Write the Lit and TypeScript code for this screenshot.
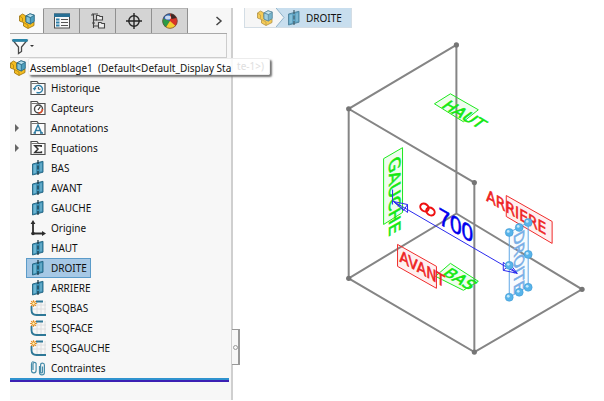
import { LitElement, html, svg, css } from "lit";
import { customElement, property } from "lit/decorators.js";
import { classMap } from "lit/directives/class-map.js";

type IconName =
  | "assembly" | "properties" | "config" | "target" | "appearance" | "chevron" | "filter"
  | "history" | "sensor" | "annotation" | "equation" | "plane" | "origin" | "sketch" | "mates";

const folder = svg`<path d="M1 14.5V1.5H7L8.5 3.5H15V14.5Z" fill="#fbfbfb" stroke="#505050" stroke-width="1.2"/><path d="M1.5 3.5H8" stroke="#777"/>`;

const ICONS: Record<IconName, unknown> = {
  assembly: svg`
    <path d="M0.5 3L3.5 1L7 3V7L9 8.5L15 9V12.5L9 15.5L4.5 13V9.5L0.5 8Z" fill="#f5bd21" stroke="#98700c" stroke-width=".8"/>
    <path d="M4.5 9.5L9 12V15.3M0.5 3L3.5 5V8.5" fill="none" stroke="#a87b10" stroke-width=".7"/>
    <path d="M7 3L11 0.8L15.3 2.2V8.5L11.3 11L7 9Z" fill="#4d9fbd" stroke="#205f7c" stroke-width=".8"/>
    <path d="M7 3L11 0.8L15.3 2.2L11.3 4.6Z" fill="#b6e0ee" stroke="#205f7c" stroke-width=".7"/>
    <path d="M11.3 4.6V11L7 9V3Z" fill="#82c3da" stroke="#205f7c" stroke-width=".7"/>`,
  properties: svg`
    <rect x=".5" y="1" width="15" height="14" fill="#f8f8f8" stroke="#4c4c4c"/>
    <rect x="0" y=".5" width="16" height="3.5" fill="#286f94"/>
    <path d="M2 6.5H5.5M2 9.5H5.5M2 12.5H5.5" stroke="#2f80aa" stroke-width="2"/>
    <path d="M7 6.5H14M7 9.5H14M7 12.5H14" stroke="#555" stroke-width="1.1"/>`,
  config: svg`
    <path d="M2 1H8M3.5 1V15M3.5 7H7M3.5 13H8" fill="none" stroke="#454545" stroke-width="1.1"/>
    <path d="M6.5 2.5H9L10 3.5H12.5V7H6.5ZM8.5 9.5H11L12 10.5H14.5V15H8.5Z" fill="#ededed" stroke="#454545" stroke-width="1.1"/>
    <path d="M2 1V3M2 10H5" stroke="#454545"/>`,
  target: svg`
    <circle cx="8" cy="8" r="5.2" fill="none" stroke="#252525" stroke-width="1.4"/>
    <path d="M8 0V16M0 8H16" stroke="#252525" stroke-width="1.4"/>`,
  appearance: svg`
    <circle cx="8" cy="8" r="7.5" fill="#d83427"/>
    <path d="M8 8L1 5.5A7.5 7.5 0 0 0 4 14.3Z" fill="#2c9b45"/>
    <path d="M8 8L1 5.5A7.5 7.5 0 0 1 8 .5Z" fill="#2868bb"/>
    <path d="M8 8L4 14.3A7.5 7.5 0 0 0 13.6 13Z" fill="#f4ce2f"/>
    <path d="M9.5 6L8.5 .6A7.5 7.5 0 0 1 14.6 5Z" fill="#3b2926"/>
    <ellipse cx="6" cy="4.6" rx="3" ry="2" fill="#fff" opacity=".75"/>
    <circle cx="8" cy="8" r="7.3" fill="none" stroke="#574b42" stroke-width=".6"/>`,
  chevron: svg`<path d="M5.5 4L10 8L5.5 12" fill="none" stroke="#444" stroke-width="1.5"/>`,
  filter: svg`
    <path d="M1 2.5H15L9.5 9V13.5L6.5 15.5V9Z" fill="#fcfcfc" stroke="#484848" stroke-width="1.3"/>
    <path d="M.5 1H15.5V3.8H.5Z" fill="#2884a8"/>`,
  history: svg`${folder}
    <path d="M4.5 9A4 3.7 0 1 1 6.5 12.3" fill="none" stroke="#2f7fa8" stroke-width="1.4"/>
    <path d="M2.7 8H6.4L4.5 10.8Z" fill="#2f7fa8"/><path d="M8.4 7V9.2H10.5" fill="none" stroke="#444"/>`,
  sensor: svg`${folder}
    <circle cx="8.5" cy="9" r="4" fill="#fff" stroke="#444" stroke-width="1.4"/>
    <path d="M8.5 13A4 4 0 0 0 12.5 9" fill="none" stroke="#e04b25" stroke-width="1.6"/>
    <path d="M8 10L10.5 6.5" stroke="#333" stroke-width="1.2"/>`,
  annotation: svg`${folder}
    <path d="M4.5 13L8 5L11.5 13M6 10.5H10M3.5 13H6M10 13H13" fill="none" stroke="#2c7aa0" stroke-width="1.4"/>`,
  equation: svg`${folder}
    <path d="M11.2 7V5.7H4.8L8 9L4.8 12.6H11.4V11.2" fill="none" stroke="#333" stroke-width="1.5"/>`,
  plane: svg`
    <path d="M2.5 4L13 1.3V12.2L2.5 15Z" fill="#3f93b8" stroke="#22627f" stroke-width=".9"/>
    <path d="M3.5 5L6 4.4V12.8L3.5 13.5Z" fill="#6fb6d2"/><path d="M10 3.6L12 3V11L10 11.6Z" fill="#62a9c7"/>
    <path d="M8 0V16" stroke="#17323f" stroke-width="1.2" stroke-dasharray="4 1.5"/>`,
  origin: svg`
    <path d="M3 2V13.5H13" fill="none" stroke="#2c2c2c" stroke-width="1.8"/>
    <path d="M.6 4L3 0L5.4 4ZM12 11.1L16 13.5L12 15.9Z" fill="#2c2c2c"/><circle cx="3" cy="13.5" r="1.8" fill="#2c2c2c"/>`,
  sketch: svg`
    <path d="M7 1V14M11 1V14M15 1V14M2 5H16M2 9H16" stroke="#dedede"/>
    <path d="M6 1.5H13M1.5 6V10Q1.5 15 6.5 15H16" fill="none" stroke="#2e7897" stroke-width="1.8"/>
    <path d="M3.5 .2V6.8M.2 3.5H6.8M1.2 1.2L5.8 5.8M5.8 1.2L1.2 5.8" stroke="#e28a1c" stroke-width="1.2"/>
    <circle cx="3.5" cy="3.5" r="1.2" fill="#fff2b0"/>`,
  mates: svg`
    <path d="M1.5 4V10.5A2.3 2.3 0 0 0 6.1 10.5V3.5A1.6 1.6 0 0 0 3 3.5V10M9.5 6V12.5A2.3 2.3 0 0 0 14.4 12.5V5A1.9 1.9 0 0 0 10.6 5V12A.9 .9 0 0 0 12.5 12V6.5" fill="none" stroke="#468ca9" stroke-width="1.2"/>
    <path d="M1.5 4A2.2 2.2 0 0 1 3.5 1.5" fill="none" stroke="#468ca9"/>`,
};

@customElement("cad-icon")
class CadIcon extends LitElement {
  @property() name: IconName = "plane";
  static styles = css`
    :host { display: inline-flex; flex: none; width: 16px; height: 16px; }
    svg { width: 100%; height: 100%; overflow: visible; }
  `;
  render() {
    return html`<svg viewBox="0 0 16 16" aria-hidden="true">${ICONS[this.name]}</svg>`;
  }
}

interface TreeItem { label: string; icon: IconName; expandable?: boolean; selected?: boolean; }

const TREE: TreeItem[] = [
  { label: "Historique", icon: "history" },
  { label: "Capteurs", icon: "sensor" },
  { label: "Annotations", icon: "annotation", expandable: true },
  { label: "Equations", icon: "equation", expandable: true },
  { label: "BAS", icon: "plane" },
  { label: "AVANT", icon: "plane" },
  { label: "GAUCHE", icon: "plane" },
  { label: "Origine", icon: "origin" },
  { label: "HAUT", icon: "plane" },
  { label: "DROITE", icon: "plane", selected: true },
  { label: "ARRIERE", icon: "plane" },
  { label: "ESQBAS", icon: "sketch" },
  { label: "ESQFACE", icon: "sketch" },
  { label: "ESQGAUCHE", icon: "sketch" },
  { label: "Contraintes", icon: "mates" },
];

@customElement("feature-panel")
class FeaturePanel extends LitElement {
  static styles = css`
    :host { display: flex; flex-direction: column; position: relative; background: #f7f7f7; border-right: 2px solid #cfcfcf; box-sizing: border-box; }
    button { font: inherit; color: inherit; padding: 0; border: 0; background: none; }
    .tabs { display: flex; height: 26px; border-bottom: 1px solid #a9a9a9; box-sizing: border-box; margin-right: 4px; }
    .tab { width: 36px; display: flex; align-items: center; justify-content: center; background: #d4d4d4; border-right: 1px solid #909090; border-top: 1px solid #b5b5b5; box-sizing: border-box; }
    .tab.active { background: #fafafa; width: 34px; border-top-color: #fafafa; }
    .more { margin-left: auto; display: flex; align-items: center; }
    .filter { display: flex; align-items: center; height: 24px; margin-right: 4px; padding-left: 2px; border: 1px solid #cdcdcd; border-left: 0; border-top: 0; box-sizing: border-box; }
    .filter button { display: flex; align-items: center; gap: 2px; }
    .caret { border: 2px solid transparent; border-top-color: #333; border-bottom: 0; }
    .filter input { flex: 1; min-width: 0; border: 0; background: none; outline: none; font: inherit; }
    .tree { list-style: none; margin: 0; padding: 0; }
    .row { display: flex; align-items: center; height: 20px; }
    .root { position: relative; z-index: 2; gap: 4px; white-space: pre; }
    .row .expander, .row .spacer { width: 16px; flex: none; display: flex; align-items: center; padding-left: 5px; box-sizing: border-box; height: 16px; }
    .arrow { border: 4px solid transparent; border-left: 4px solid #666; border-right: 0; }
    .item { display: flex; align-items: center; gap: 5px; height: 20px; padding: 0 3px; border: 1px solid transparent; box-sizing: border-box; white-space: nowrap; }
    .item.selected { background: #a6c8e5; border-color: #5b9bc9; }
    .rollback { height: 4px; margin: 0 2px 0 0; border: 0; background: linear-gradient(#2f93cf 50%, #3b20b4 50%); }
    .tip { position: absolute; z-index: 1; left: 18px; right: -39px; top: 50px; height: 17px; background: rgba(255, 255, 255, .88); border: 1px solid #ececec; border-radius: 2px; box-shadow: 2px 2px 2px #777; box-sizing: border-box; color: #dedede; text-align: right; line-height: 15px; padding-right: 5px; white-space: pre; }
    .grip { position: absolute; right: -9px; bottom: 35px; width: 8px; height: 36px; background: #f7f7f7; border: 1px solid #999; border-left: 0; border-right-width: 2px; display: flex; align-items: center; justify-content: center; }
    .knob { width: 3px; height: 3px; border: 1px solid #999; border-radius: 50%; flex: none; }
  `;
  render() {
    const tabs: [IconName, string][] = [
      ["assembly", "Arbre de création"], ["properties", "Propriétés"], ["config", "Configurations"],
      ["target", "Cotation"], ["appearance", "Apparences"],
    ];
    return html`
      <div class="tabs" role="tablist">
        ${tabs.map(([icon, label], i) => html`
          <button role="tab" aria-label=${label} aria-selected=${i === 0} class=${classMap({ tab: true, active: i === 0 })}>
            <cad-icon name=${icon}></cad-icon>
          </button>`)}
        <button class="more" aria-label="Plus"><cad-icon name="chevron"></cad-icon></button>
      </div>
      <div class="filter">
        <button aria-label="Filtre"><cad-icon name="filter"></cad-icon><span class="caret"></span></button>
        <input type="text" aria-label="Filtrer l'arbre">
      </div>
      <div class="row root"><cad-icon name="assembly"></cad-icon><span>Assemblage1  (Default&lt;Default_Display Sta</span></div>
      <div class="tip" role="tooltip">te-1&gt;)</div>
      <ul class="tree">
        ${TREE.map((t) => html`
          <li class="row">
            ${t.expandable
              ? html`<button class="expander" aria-label="Développer ${t.label}"><span class="arrow"></span></button>`
              : html`<span class="spacer"></span>`}
            <button class=${classMap({ item: true, selected: !!t.selected })}><cad-icon name=${t.icon}></cad-icon>${t.label}</button>
          </li>`)}
      </ul>
      <hr class="rollback">
      <button class="grip" aria-label="Réduire le panneau"><span class="knob"></span></button>
    `;
  }
}

const EDGES = "M456 45L348 109L474 183V353L348 279V109M456 45V214L348 279M456 214L582 290L474 353";
const VERTICES = [[456, 45], [348, 109], [474, 183], [348, 279], [474, 353], [582, 290]];
const HANDLES = [[509, 233], [519, 228], [528, 223], [509, 266], [528, 255], [509, 298], [519, 293], [528, 288]];

/* Axis vectors of the three isometric planes. */
const FRONT = ".87 .5 0 1";
const SIDE = "0 1 -.87 .5";
const TOP = ".87 .5 -.8 .6";

const PLANES = [
  { label: "HAUT", tone: "green", box: "450,94 478,110 463,122 434,104", plane: TOP, x: 440, y: 107, size: "m" },
  { label: "GAUCHE", tone: "green", box: "383,159 402,148 402,213 383,225", plane: SIDE, x: 388, y: 161, size: "l" },
  { label: "BAS", tone: "green", box: "450,264 478,282 463,291 435,277", plane: TOP, x: 441, y: 275, size: "m" },
  { label: "AVANT", tone: "red", box: "397,245 436,267 436,289 397,267", plane: FRONT, x: 399, y: 262, size: "m" },
  { label: "ARRIERE", tone: "red", box: "506,196 552,222 552,244 506,217", plane: FRONT, x: 486, y: 201, size: "m" },
  { label: "DROITE", tone: "blue", box: "509,233 528,223 528,287 509,298", plane: SIDE, x: 514, y: 235, size: "m" },
];

@customElement("model-view")
class ModelView extends LitElement {
  static styles = css`
    :host { display: block; }
    svg { display: block; width: 100%; }
    text { font-family: "DejaVu Sans", sans-serif; stroke-width: .6; }
    .m { font-size: 16px; } .l { font-size: 18px; }
    .edges { fill: none; stroke: #858585; stroke-width: 2; }
    .vertex { fill: #757575; }
    .green polygon { stroke: #1de81d; fill: #1de81d; } .green text { fill: #12e812; stroke: #12e812; }
    .red polygon { stroke: #f02a2a; fill: #f02a2a; } .red text { fill: #ee2222; stroke: #ee2222; }
    .blue polygon { stroke: #5fa8e6; fill: #8fc4f2; } .blue text { fill: #78aee6; stroke: #78aee6; }
    polygon { fill-opacity: .07; }
    .dim { fill: none; stroke: #2a2aee; stroke-width: 1; }
    .value { font-family: "Liberation Sans", sans-serif; font-size: 24px; fill: #0000ee; stroke: #0000ee; }
    .link { fill: none; stroke: #ee1111; stroke-width: 2; }
    .handle { fill: #58b4ea; stroke: #3b93cf; stroke-width: .5; }
    .shine { fill: #c4e8fb; }
  `;
  render() {
    return html`
      <svg viewBox="232 28 372 340" role="img" aria-label="Assemblage1">
        <path class="edges" d=${EDGES}></path>
        ${VERTICES.map(([x, y]) => svg`<circle class="vertex" cx=${x} cy=${y} r="2.6"/>`)}
        ${PLANES.map((p) => svg`
          <g class=${p.tone}>
            <polygon points=${p.box}/>
            <text class=${p.size} transform="matrix(${p.plane} ${p.x} ${p.y})">${p.label}</text>
          </g>`)}
        <path class="dim" d="M392 190V205M393 202L517 274M393 202L407 205V213ZM393 202L403 211L407 205M517 274L503 263V271ZM517 274L510 265L503 271"></path>
        <text class="value" transform="matrix(${FRONT} 438 224)">700</text>
        <g class="link">
          <ellipse cx="424" cy="208" rx="4.5" ry="3.6" transform="rotate(35 424 208)"></ellipse>
          <ellipse cx="430" cy="212" rx="4.5" ry="3.6" transform="rotate(35 430 212)"></ellipse>
        </g>
        ${HANDLES.map(([x, y]) => svg`<circle class="handle" cx=${x} cy=${y} r="4"/><circle class="shine" cx=${x - 1} cy=${y - 1} r="1.4"/>`)}
      </svg>`;
  }
}

@customElement("app-root")
class AppRoot extends LitElement {
  static styles = css`
    :host { display: flex; min-height: 100vh; box-sizing: border-box; padding: 8px 0 1px 10px; background: #fff; color: #111; font: 10px/16px "Noto Sans", "Open Sans", sans-serif; overflow: hidden; }
    feature-panel { flex: none; width: 223px; }
    main { flex: 1; min-width: 0; }
    .crumbs { display: flex; width: max-content; height: 20px; margin-left: 11px; border: 1px solid #d3dde5; border-top: 0; box-sizing: border-box; }
    .crumb { display: flex; align-items: center; color: inherit; text-decoration: none; }
    .home { padding: 0 3px 0 12px; background: #f6f6f6; }
    .home cad-icon, .current cad-icon { opacity: .75; }
    .sep { width: 9px; height: 19px; background: #c8deee; }
    .current { gap: 4px; padding: 0 9px 0 1px; background: #c8deee; }
  `;
  render() {
    return html`
      <feature-panel></feature-panel>
      <main>
        <nav class="crumbs" aria-label="Sélection">
          <a class="crumb home" href="#assemblage" aria-label="Assemblage1"><cad-icon name="assembly"></cad-icon></a>
          <svg class="sep" viewBox="0 0 9 19" aria-hidden="true"><path d="M0 0L8 9.5L0 19Z" fill="#f6f6f6"/><path d="M0 0L8 9.5L0 19" fill="none" stroke="#8fb2c9"/></svg>
          <a class="crumb current" href="#droite"><cad-icon name="plane"></cad-icon>DROITE</a>
        </nav>
        <model-view></model-view>
      </main>`;
  }
}
